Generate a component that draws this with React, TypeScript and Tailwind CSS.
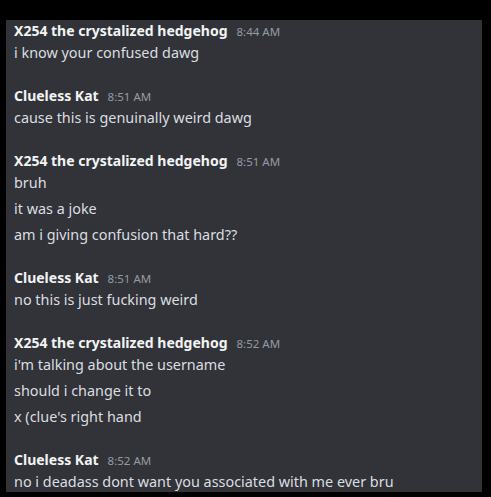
type Group = { name: string; time: string; lines: string[] };

const groups: Group[] = [
  { name: "X254 the crystalized hedgehog", time: "8:44 AM", lines: ["i know your confused dawg"] },
  { name: "Clueless Kat", time: "8:51 AM", lines: ["cause this is genuinally weird dawg"] },
  {
    name: "X254 the crystalized hedgehog",
    time: "8:51 AM",
    lines: ["bruh", "it was a joke", "am i giving confusion that hard??"],
  },
  { name: "Clueless Kat", time: "8:51 AM", lines: ["no this is just fucking weird"] },
  {
    name: "X254 the crystalized hedgehog",
    time: "8:52 AM",
    lines: ["i'm talking about the username", "should i change it to", "x (clue's right hand"],
  },
  { name: "Clueless Kat", time: "8:52 AM", lines: ["no i deadass dont want you associated with me ever bru"] },
];

export default function App() {
  return (
    <div className="w-[491px] h-[497px] bg-black pt-[20px] pl-[6px] overflow-hidden">
      <div
        className="w-[476px] h-[472px] bg-[#313338] pl-[8px] flex flex-col gap-[21px] overflow-hidden"
        style={{ fontFamily: '"Noto Sans", sans-serif' }}
      >
        {groups.map((g, i) => (
          <div key={i} className="flex flex-col">
            <div className="h-[22px] flex items-baseline gap-[9px] leading-[22px]">
              <span className="text-[14px] font-bold text-[#f2f3f5]">{g.name}</span>
              <span className="text-[11.5px] text-[#949ba4]">{g.time}</span>
            </div>
            {g.lines.map((l, j) => (
              <div
                key={j}
                className={"h-[22px] leading-[22px] text-[14.4px] text-[#dbdee1] " + (j > 0 ? "mt-[4px]" : "")}
              >
                {l}
              </div>
            ))}
          </div>
        ))}
      </div>
    </div>
  );
}
